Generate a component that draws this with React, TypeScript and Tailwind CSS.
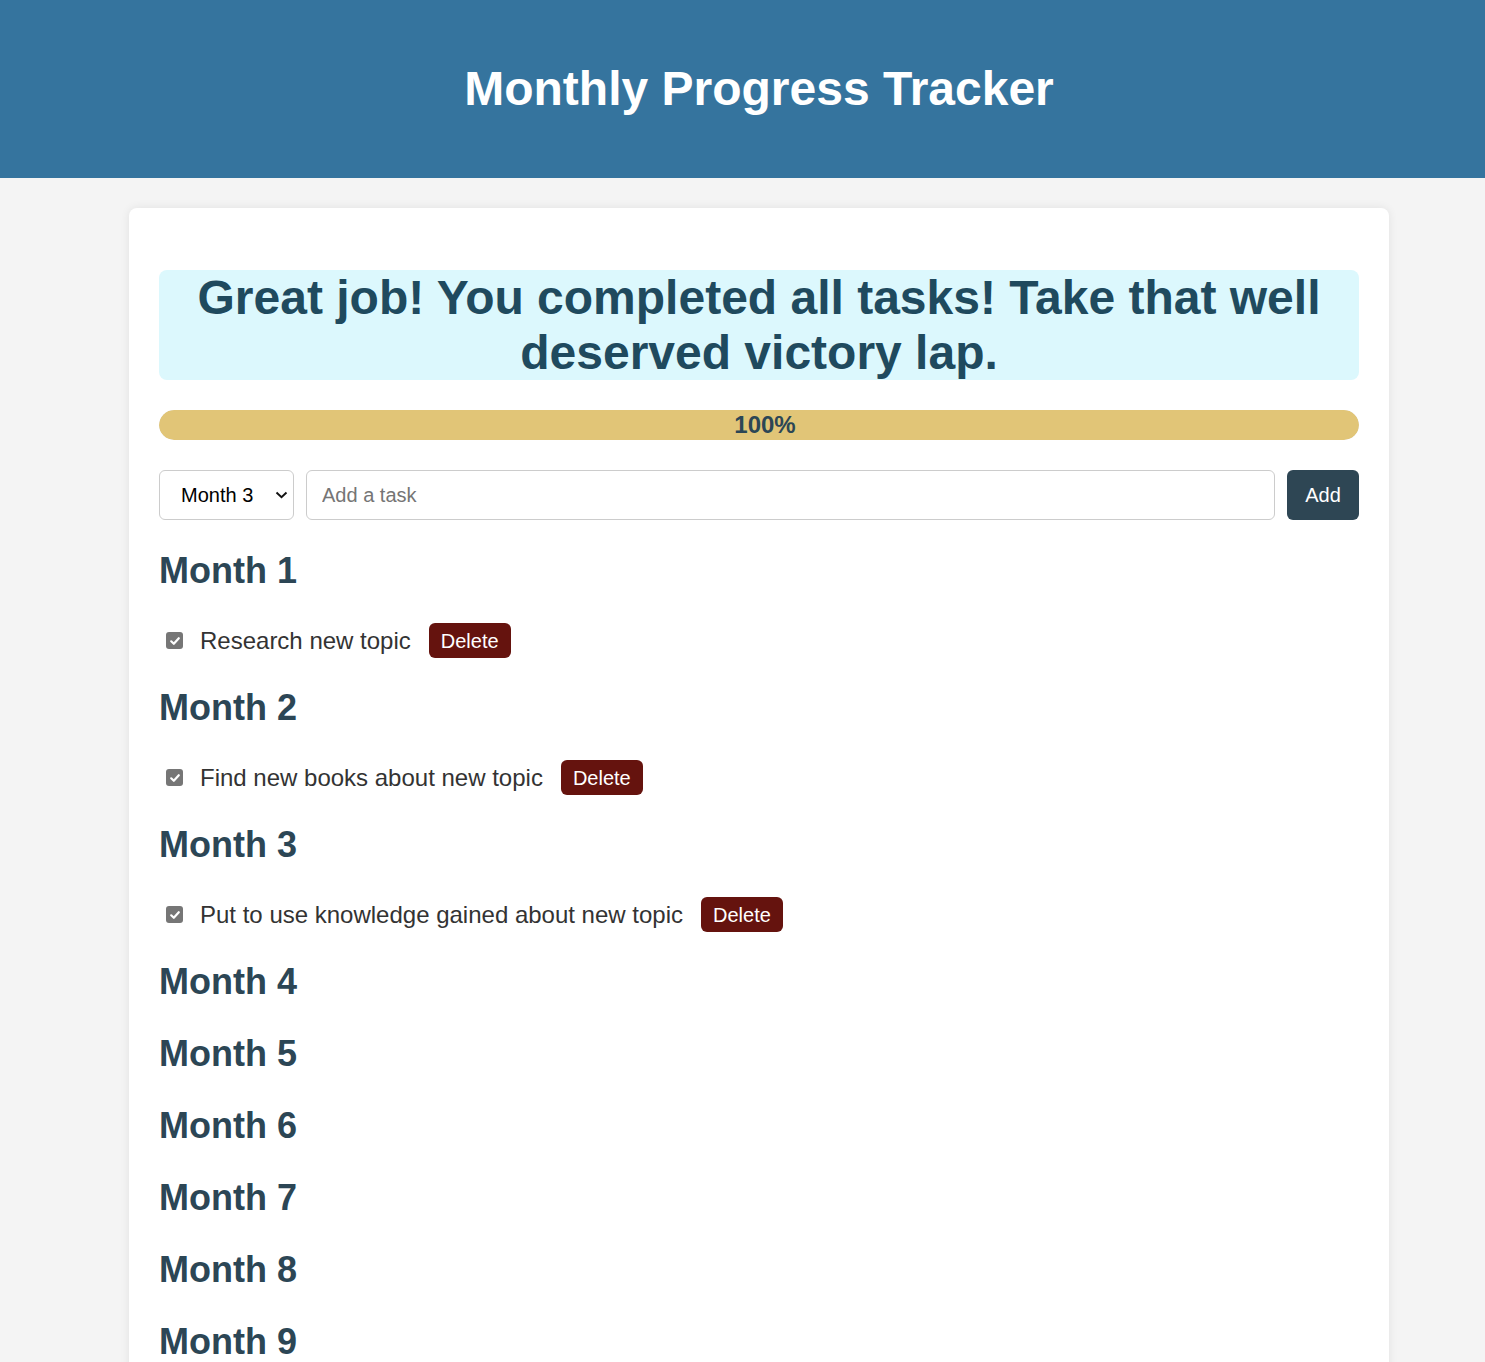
import React, { useState } from 'react';

type Task = { id: number; month: number; text: string; done: boolean };

const initialTasks: Task[] = [
  { id: 1, month: 1, text: 'Research new topic', done: true },
  { id: 2, month: 2, text: 'Find new books about new topic', done: true },
  { id: 3, month: 3, text: 'Put to use knowledge gained about new topic', done: true },
];

const months = Array.from({ length: 12 }, (_, i) => i + 1);

const CheckBox: React.FC<{ checked: boolean; onClick: () => void }> = ({ checked, onClick }) => (
  <button
    type="button"
    onClick={onClick}
    className={`ml-[7px] flex h-[17px] w-[17px] items-center justify-center rounded-[3px] ${
      checked ? 'bg-[#767676]' : 'border border-[#767676] bg-white'
    }`}
  >
    {checked && (
      <svg width="12" height="12" viewBox="0 0 12 12" fill="none">
        <path d="M2.2 6.3 4.8 8.8 9.8 3.2" stroke="white" strokeWidth="2.2" strokeLinecap="round" strokeLinejoin="round" />
      </svg>
    )}
  </button>
);

const App: React.FC = () => {
  const [tasks, setTasks] = useState<Task[]>(initialTasks);
  const [month, setMonth] = useState(3);
  const [text, setText] = useState('');

  const done = tasks.filter((t) => t.done).length;
  const pct = tasks.length ? Math.round((done / tasks.length) * 100) : 0;

  const addTask = () => {
    if (!text.trim()) return;
    setTasks([...tasks, { id: Date.now(), month, text: text.trim(), done: false }]);
    setText('');
  };

  return (
    <div className="min-h-screen w-full overflow-hidden bg-[#f4f4f4] font-['Liberation_Sans',Arial,sans-serif]">
      <div className="w-[1518px]">
        {/* Header */}
        <header className="flex h-[178px] items-center justify-center bg-[#35749e]">
          <h1 className="text-[48px] font-bold leading-none text-white">Monthly Progress Tracker</h1>
        </header>

        {/* Card */}
        <main className="mx-auto mt-[30px] w-[1260px] rounded-lg bg-white px-[30px] pb-[30px] pt-[62px] shadow-[0_0_10px_rgba(0,0,0,0.08)]">
          {pct === 100 && (
            <div className="rounded-lg bg-[#dcf8fd] text-center text-[48px] font-bold leading-[55px] text-[#1f4a5e]">
              Great job! You completed all tasks! Take that well deserved victory lap.
            </div>
          )}

          {/* Progress */}
          <div className="mt-[30px] h-[30px] w-full overflow-hidden rounded-full bg-[#e9e9e9]">
            <div
              className="flex h-full items-center justify-center rounded-full bg-[#e1c577]"
              style={{ width: `${pct}%` }}
            >
              <span className="ml-[12px] text-[24px] font-bold leading-none text-[#2c4655]">{pct}%</span>
            </div>
          </div>

          {/* Add form */}
          <div className="mt-[30px] flex h-[50px] items-stretch gap-[12px]">
            <div className="relative w-[135px]">
              <select
                value={month}
                onChange={(e) => setMonth(Number(e.target.value))}
                className="h-full w-full appearance-none rounded-[6px] border border-[#cccccc] bg-white pl-[21px] text-[20px] text-black outline-none"
              >
                {months.map((m) => (
                  <option key={m} value={m}>
                    Month {m}
                  </option>
                ))}
              </select>
              <svg
                className="pointer-events-none absolute right-[6px] top-[21px]"
                width="13"
                height="8"
                viewBox="0 0 13 8"
                fill="none"
              >
                <path d="M1.5 1.5 6.5 6.3 11.5 1.5" stroke="#111" strokeWidth="1.9" />
              </svg>
            </div>
            <input
              value={text}
              onChange={(e) => setText(e.target.value)}
              placeholder="Add a task"
              className="flex-1 rounded-[6px] border border-[#cccccc] px-[15px] text-[20px] text-[#333] outline-none placeholder:text-[#757575]"
            />
            <button
              type="button"
              onClick={addTask}
              className="w-[72px] rounded-[6px] bg-[#2e4654] text-[20px] text-white"
            >
              Add
            </button>
          </div>

          {/* Months */}
          <div className="mt-[29px] flex flex-col gap-[28px]">
            {months.map((m) => {
              const list = tasks.filter((t) => t.month === m);
              return (
                <section key={m}>
                  <h2 className="text-[36px] font-bold leading-[44px] text-[#2c4655]">Month {m}</h2>
                  {list.length > 0 && (
                    <ul className="mt-[30px] flex flex-col gap-[10px]">
                      {list.map((t) => (
                        <li key={t.id} className="flex h-[35px] items-center">
                          <CheckBox
                            checked={t.done}
                            onClick={() =>
                              setTasks(tasks.map((x) => (x.id === t.id ? { ...x, done: !x.done } : x)))
                            }
                          />
                          <span className="ml-[17px] text-[24px] text-[#333333]">{t.text}</span>
                          <button
                            type="button"
                            onClick={() => setTasks(tasks.filter((x) => x.id !== t.id))}
                            className="ml-[18px] h-[35px] rounded-[6px] bg-[#65130e] px-[12px] text-[20px] text-white"
                          >
                            Delete
                          </button>
                        </li>
                      ))}
                    </ul>
                  )}
                </section>
              );
            })}
          </div>
        </main>
      </div>
    </div>
  );
};

export default App;
